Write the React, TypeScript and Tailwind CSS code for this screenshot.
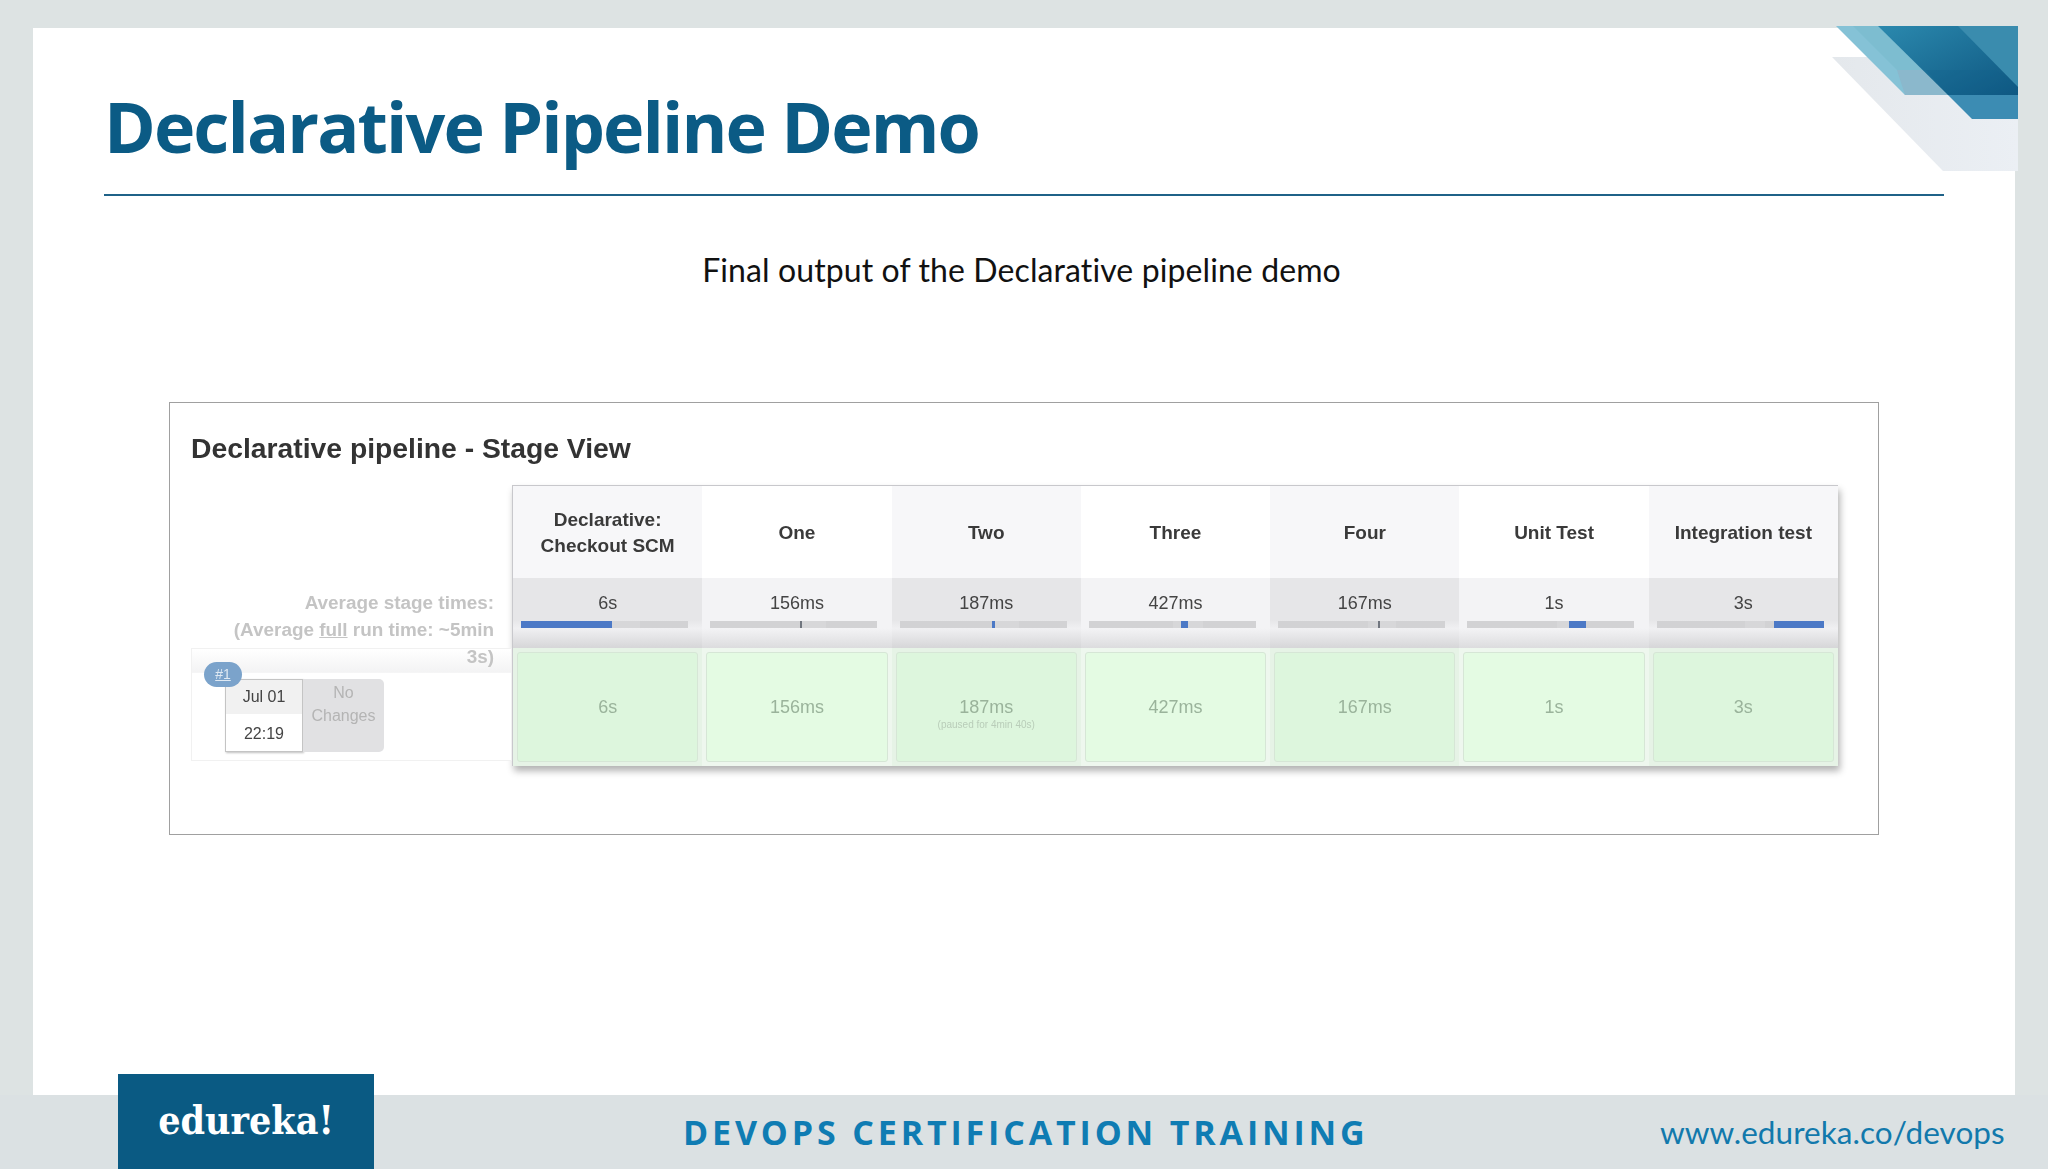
const stages = [
  { name: ["Declarative:", "Checkout SCM"], time: "6s", blue: [0, 91], faint: [91, 28] },
  { name: ["One"], time: "156ms", blue: [90, 2], faint: [92, 24], dark: true },
  { name: ["Two"], time: "187ms", blue: [92, 3], faint: [95, 24] },
  { name: ["Three"], time: "427ms", blue: [92, 7], faint: [84, 30] },
  { name: ["Four"], time: "167ms", blue: [100, 2], faint: [90, 28], dark: true },
  { name: ["Unit Test"], time: "1s", blue: [102, 17], faint: [90, 12] },
  { name: ["Integration test"], time: "3s", blue: [117, 50], faint: [88, 20] },
]

function Bar({ blue, faint, dark }: { blue: number[]; faint: number[]; dark?: boolean }) {
  return (
    <div className="relative ml-[8px] mt-[5px] h-[7px] w-[167px] bg-[#d2d2d4]">
      <div className="absolute top-0 h-full bg-[#d7d7d9]" style={{ left: faint[0], width: faint[1] }} />
      <div
        className={`absolute top-0 h-full ${dark ? "bg-[#71767f]" : "bg-[#4c79c6]"}`}
        style={{ left: blue[0], width: blue[1] }}
      />
    </div>
  )
}

function StageTable() {
  return (
    <div className="grid w-[1326px] grid-cols-7 border-t border-l border-[#c8c8cc] bg-white shadow-[2px_5px_7px_rgba(0,0,0,0.3)]">
      {stages.map((s, i) => (
        <div key={s.time + i} className="flex flex-col">
          <div
            className={`flex h-[92px] flex-col items-center justify-center pt-[1px] text-[19px] leading-[26px] font-bold text-[#3a3a3a] ${
              i % 2 === 0 ? "bg-[#f7f7f9]" : "bg-white"
            }`}
          >
            {s.name.map((line) => (
              <span key={line}>{line}</span>
            ))}
          </div>
          <div
            className={`h-[70px] pt-[12px] text-[18px] leading-[26px] text-[#444] ${
              i % 2 === 0
                ? "bg-[linear-gradient(#e6e6e8_60%,#f0f0f2_72%,#d6d6d8)]"
                : "bg-[linear-gradient(#f3f3f5_72%,#dcdcde)]"
            }`}
          >
            <p className="text-center">{s.time}</p>
            <Bar blue={s.blue} faint={s.faint} dark={s.dark} />
          </div>
          <div className={`h-[118px] p-[4px] ${i % 2 === 0 ? "bg-[#e6f3e6]" : "bg-[#eef7ee]"}`}>
            <div
              className={`flex h-full flex-col items-center justify-center rounded-[3px] border border-[#d6e6d6] text-[18px] leading-[22px] text-[#9ab39b] ${
                i % 2 === 0 ? "bg-[#ddf6dd]" : "bg-[#e4fbe3]"
              }`}
            >
              <span>{s.time}</span>
              {s.time === "187ms" ? (
                <span className="h-0 text-[10px] leading-[14px] text-[#b9cdb9]">(paused for 4min 40s)</span>
              ) : null}
            </div>
          </div>
        </div>
      ))}
    </div>
  )
}

function LeftPanel() {
  return (
    <div className="w-[321px] shrink-0 pt-[92px]">
      <div className="relative z-10 h-[71px] pt-[12px] pr-[18px] text-right text-[18.9px] leading-[27px] font-bold text-[#c4c4c4]">
        <p>Average stage times:</p>
        <p>
          (Average <span className="underline">full</span> run time: ~5min
        </p>
        <p>3s)</p>
      </div>
      <div className="relative h-[113px] border border-[#f1f1f1] bg-[linear-gradient(#ffffff,#f3f3f4_21%,#ffffff_22%)] pt-[30px] pl-[33px]">
        <span className="absolute top-[13px] left-[12px] flex h-[25px] w-[38px] items-center justify-center rounded-full bg-[#7ba3cb] text-[14px] text-[#dfe9f3] underline">
          #1
        </span>
        <div className="flex h-[73px] w-[159px]">
          <div className="w-[78px] border border-[#c4c4c4] text-center text-[16px] text-[#444] shadow-[1px_1px_2px_rgba(0,0,0,0.25)]">
            <p className="h-[34px] bg-[#f1f1f1] pt-[5px] leading-[24px]">Jul 01</p>
            <p className="pt-[8px] leading-[24px]">22:19</p>
          </div>
          <div className="flex-1 rounded-r-[5px] bg-[#e1e1e3] pt-[2px] text-center text-[16px] leading-[23px] text-[#b4b4b4]">
            <p>No</p>
            <p>Changes</p>
          </div>
        </div>
      </div>
    </div>
  )
}

function CornerArt() {
  return (
    <svg className="absolute top-[25px] left-[1820px]" width="198" height="146" viewBox="0 0 198 146">
      <defs>
        <linearGradient id="navy" x1="0" y1="0" x2="1" y2="1">
          <stop offset="0" stopColor="#2b89ae" />
          <stop offset="1" stopColor="#0e5680" />
        </linearGradient>
        <linearGradient id="pale" x1="0" y1="0" x2="1" y2="0">
          <stop offset="0" stopColor="#e4e8ec" />
          <stop offset="1" stopColor="#ebeff4" />
        </linearGradient>
      </defs>
      <polygon points="12,32 198,32 198,146 123,146" fill="url(#pale)" />
      <polygon points="16,1 90,1 150,70 85,70" fill="#85c2d6" />
      <polygon points="33,1 58,1 106,45 77,45" fill="#7dbdd0" />
      <polygon points="77,45 106,45 128,70 85,70" fill="#8bb8cc" />
      <polygon points="58,1 198,1 198,70 128,70" fill="url(#navy)" />
      <polygon points="138,1 198,1 198,62" fill="#3a8cae" />
      <polygon points="106,45 176,45 198,62 198,70 128,70" fill="#0e5f8a" opacity="0.25" />
      <polygon points="128,70 198,70 198,94 152,94" fill="#3c8cb3" />
    </svg>
  )
}

export default function App() {
  return (
    <div className="relative flex h-[1169px] w-[2048px] flex-col overflow-hidden bg-[#dde3e3] pt-[28px] font-['Liberation_Sans',sans-serif]">
      <div className="ml-[33px] flex h-[1067px] w-[1982px] flex-col bg-white pl-[71px]">
        <h1 className="h-[166px] pt-[56px] font-['Open_Sans',sans-serif] text-[70px] leading-[84px] font-bold tracking-[-1.9px] text-[#0b5b85]">
          Declarative Pipeline Demo
        </h1>
        <div className="h-[2px] w-[1840px] bg-[#1f6288]" />
        <p className="mt-[55px] w-[1835px] text-center font-['Lato',sans-serif] text-[32px] leading-[38px] tracking-[0.1px] text-[#111]">
          Final output of the Declarative pipeline demo
        </p>
        <div className="mt-[113px] ml-[65px] h-[433px] w-[1710px] border-[1.5px] border-[#a0a0a0] px-[21px] pt-[27px] blur-[0.7px]">
          <h2 className="h-[55px] text-[28.3px] leading-[36px] font-bold text-[#333]">
            Declarative pipeline - Stage View
          </h2>
          <div className="flex">
            <LeftPanel />
            <StageTable />
          </div>
        </div>
      </div>
      <footer className="relative flex flex-1 items-center bg-[#dbe1e3]">
        <div className="absolute -top-[21px] left-[118px] flex h-[95px] w-[256px] justify-center bg-[#0a5a83] pt-[24px] font-['DejaVu_Serif_Condensed','DejaVu_Serif',serif] text-[39px] leading-[44px] font-bold text-white">
          edureka!
        </div>
        <p className="ml-[683px] w-[680px] font-['Open_Sans',sans-serif] text-[34px] leading-[40px] font-bold tracking-[3.85px] whitespace-nowrap text-[#0f7cb3]">
          DEVOPS CERTIFICATION TRAINING
        </p>
        <p className="ml-[297px] font-['Lato',sans-serif] text-[31.5px] leading-[40px] tracking-[0.05px] whitespace-nowrap text-[#1279ac]">
          www.edureka.co/devops
        </p>
      </footer>
      <CornerArt />
    </div>
  )
}
